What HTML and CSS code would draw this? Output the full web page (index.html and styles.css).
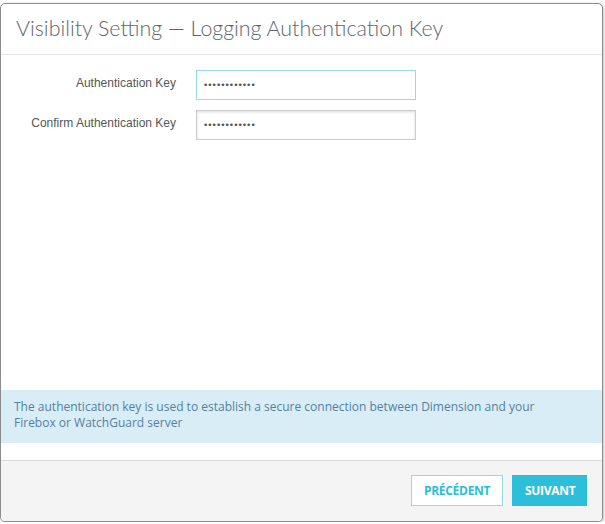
FILE: index.html
```html
<!DOCTYPE html>
<html lang="en">
<head>
  <meta charset="UTF-8">
  <title>Visibility Setting</title>
  <link rel="stylesheet" href="styles.css">
</head>
<body>
  <div class="dialog">
    <div class="dialog-header">Visibility Setting — Logging Authentication Key</div>

    <div class="dialog-body">
      <div class="form-row">
        <label for="authKey">Authentication Key</label>
        <input type="password" id="authKey" class="focused" value="abcdefghijkl">
      </div>
      <div class="form-row">
        <label for="confirmKey">Confirm Authentication Key</label>
        <input type="password" id="confirmKey" value="abcdefghijkl">
      </div>
    </div>

    <div class="info-box">
      The authentication key is used to establish a secure connection between Dimension and your Firebox or WatchGuard server
    </div>

    <div class="dialog-footer">
      <button class="btn btn-outline">PRÉCÉDENT</button>
      <button class="btn btn-primary">SUIVANT</button>
    </div>
  </div>
</body>
</html>
```

FILE: styles.css
```css
body {
  margin: 0;
  background-color: #fff;
  font-family: "Liberation Sans", Arial, sans-serif;
}
.dialog {
  box-sizing: border-box;
  width: 603px;
  height: 519px;
  margin-top: 3px;
  border: 1px solid #8c8c8c;
  border-radius: 5px;
  box-shadow: 1px 1px 3px rgba(0, 0, 0, 0.25);
  background-color: #fff;
  display: flex;
  flex-direction: column;
  overflow: hidden;
}
.dialog-header {
  height: 51px;
  padding: 11px 0 0 15px;
  box-sizing: border-box;
  border-bottom: 1px solid #e6e6e6;
  font-family: Lato, sans-serif;
  font-weight: 300;
  font-size: 21.4px;
  color: #5d6670;
}
.dialog-body {
  flex: 1;
  padding-top: 15px;
}
.form-row {
  display: flex;
  align-items: center;
  margin-bottom: 10px;
}
.form-row label {
  width: 175px;
  text-align: right;
  font-size: 12px;
  color: #555;
  margin-right: 20px;
  position: relative;
  top: -2px;
}
.form-row input {
  box-sizing: border-box;
  width: 220px;
  height: 30px;
  padding: 0 6px;
  border: 1px solid #ccc;
  box-shadow: inset 0 1px 3px rgba(0, 0, 0, 0.15);
  font-family: Verdana, "DejaVu Sans", sans-serif;
  font-size: 9px;
  letter-spacing: -1px;
  color: #555;
  background-color: #fff;
  outline: none;
}
.form-row input.focused {
  border-color: #92dbe8;
  box-shadow: none;
}
.info-box {
  background-color: #d9edf7;
  color: #5580a2;
  font-family: "Open Sans", sans-serif;
  font-size: 12px;
  line-height: 16px;
  padding: 9px 40px 12px 13px;
  height: 53px;
  box-sizing: border-box;
  margin-bottom: 17px;
}
.dialog-footer {
  height: 61px;
  box-sizing: border-box;
  border-top: 1px solid #dcdcdc;
  background-color: #f4f4f4;
  display: flex;
  justify-content: flex-end;
  align-items: flex-start;
  padding: 14px 15px 0 0;
  gap: 9px;
}
.btn {
  height: 31px;
  box-sizing: border-box;
  font-family: "Open Sans", sans-serif;
  font-weight: 700;
  font-size: 12px;
  letter-spacing: -0.3px;
  padding: 0 12px;
  border: 1px solid #2bbfd9;
  cursor: pointer;
}
.btn-outline {
  background-color: #fff;
  border-color: #92dbe8;
  color: #2bbdd8;
  width: 92px;
}
.btn-primary {
  background-color: #2bbfd9;
  color: #fff;
  width: 75px;
}
```
